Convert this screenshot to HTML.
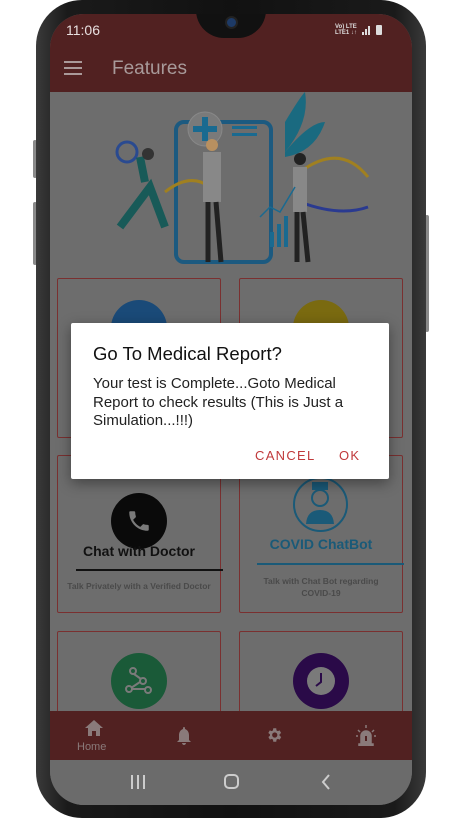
<!DOCTYPE html>
<html><head><meta charset="utf-8"><style>
*{margin:0;padding:0;box-sizing:border-box}
body{width:461px;height:818px;background:#fff;position:relative;overflow:hidden;font-family:"Liberation Sans",Roboto,sans-serif}
.frame{position:absolute;left:36px;top:0;width:390px;height:818px;border-radius:46px;background:linear-gradient(90deg,#3a3a3a,#1a1a1a 8%,#111 50%,#1a1a1a 92%,#3a3a3a);}
.btn{position:absolute;background:#8a8a8a;border-radius:2px}
.screen{position:absolute;left:50px;top:14px;width:362px;height:791px;border-radius:34px;overflow:hidden;background:#6d6d6d}
.status{position:absolute;left:0;top:0;width:362px;height:78px;background:#512121}
.abs{position:absolute}
.card{position:absolute;border:1px solid #7a3030;background:#6d6d6d;border-radius:2px}
.dialog{position:absolute;left:71px;top:323px;width:318px;height:156px;background:#fff;border-radius:2px;box-shadow:0 4px 14px rgba(0,0,0,.4)}
</style></head><body>
<div class="btn" style="left:33px;top:140px;width:4px;height:38px"></div>
<div class="btn" style="left:33px;top:202px;width:4px;height:63px"></div>
<div class="btn" style="left:425px;top:215px;width:4px;height:117px"></div>
<div class="frame"></div>
<div class="screen">
 <div class="status"></div>
 <div class="abs" style="left:146px;top:-4px;width:70px;height:28px;background:#111;border-radius:0 0 35px 35px"></div>
 <div class="abs" style="left:175px;top:2px;width:13px;height:13px;border-radius:50%;background:#1d3a66;border:2px solid #222"></div>
 <div class="abs" style="left:16px;top:8px;color:#e8e0e0;font-size:14px">11:06</div>
 <div class="abs" style="left:285px;top:10px;color:#ddd;font-size:6px;line-height:6px;font-weight:bold">Vo) LTE<br>LTE1 ↓↑</div>
 <svg class="abs" style="left:312px;top:10px" width="30" height="12"><rect x="0" y="8" width="2" height="3" fill="#ddd"/><rect x="3" y="5" width="2" height="6" fill="#ddd"/><rect x="6" y="2" width="2" height="9" fill="#ddd"/><rect x="14" y="1" width="6" height="10" rx="1" fill="#ddd"/></svg>
 <svg class="abs" style="left:14px;top:47px" width="18" height="14"><rect y="0" width="18" height="2" fill="#a99"/><rect y="6" width="18" height="2" fill="#a99"/><rect y="12" width="18" height="2" fill="#a99"/></svg>
 <div class="abs" style="left:62px;top:44px;color:#a89a9a;font-size:19px">Features</div>
 <svg class="abs" style="left:0;top:78px" width="362" height="190">
  <rect x="126" y="30" width="95" height="140" rx="8" fill="none" stroke="#1c5a80" stroke-width="4"/>
  <circle cx="155" cy="37" r="17" fill="#7a7a7a" stroke="#888"/>
  <rect x="152" y="25" width="6" height="24" fill="#1a6a90"/><rect x="143" y="34" width="24" height="6" fill="#1a6a90"/>
  <rect x="182" y="34" width="25" height="3" fill="#1a6a90"/><rect x="182" y="41" width="25" height="3" fill="#1a6a90"/>
  <path d="M235 30 Q250 5 255 0 Q260 30 235 60Z" fill="#1a6a80"/><path d="M235 60 Q260 30 275 30 Q265 60 235 65Z" fill="#1a6a80"/>
  <path d="M115 100 Q140 80 160 95" stroke="#a08020" stroke-width="3" fill="none"/>
  <path d="M250 80 Q290 50 318 85" stroke="#a08020" stroke-width="3" fill="none"/>
  <path d="M250 110 Q290 125 318 115" stroke="#2a3a90" stroke-width="3" fill="none"/>
  <circle cx="77" cy="60" r="10" fill="none" stroke="#2a4a90" stroke-width="3"/>
  <path d="M70 135 l30-40 l15 40 M95 90 l-5-25" stroke="#185a58" stroke-width="8" fill="none"/>
  <circle cx="98" cy="62" r="6" fill="#333"/>
  <rect x="153" y="60" width="18" height="50" fill="#888"/><path d="M158 110 l0 60 M166 110 l5 60" stroke="#222" stroke-width="5"/>
  <circle cx="162" cy="53" r="6" fill="#b89060"/>
  <rect x="243" y="75" width="14" height="45" fill="#888"/><path d="M247 120 l0 50 M253 120 l5 50" stroke="#222" stroke-width="5"/>
  <circle cx="250" cy="67" r="6" fill="#222"/>
  <path d="M210 125 l10-10 l10 5 l15-25" stroke="#1a6a90" stroke-width="1.5" fill="none"/>
  <rect x="220" y="140" width="4" height="15" fill="#1a6a90"/><rect x="227" y="132" width="4" height="23" fill="#1a6a90"/><rect x="234" y="124" width="4" height="31" fill="#1a6a90"/>
 </svg>
 <div class="card" style="left:7px;top:264px;width:164px;height:160px"></div>
 <div class="card" style="left:189px;top:264px;width:164px;height:160px"></div>
 <div class="abs" style="left:61px;top:286px;width:56px;height:56px;border-radius:50%;background:#1a4a78"></div>
 <div class="abs" style="left:243px;top:286px;width:56px;height:56px;border-radius:50%;background:#7a6a10"></div>
 <div class="card" style="left:7px;top:441px;width:164px;height:158px"></div>
 <div class="card" style="left:189px;top:441px;width:164px;height:158px"></div>
 <div class="abs" style="left:61px;top:479px;width:56px;height:56px;border-radius:50%;background:#0a0a0a"></div>
 <svg class="abs" style="left:76px;top:494px" width="26" height="26" viewBox="0 0 24 24"><path fill="#7a7a7a" d="M6.6 10.8c1.4 2.8 3.8 5.1 6.6 6.6l2.2-2.2c.3-.3.7-.4 1-.2 1.1.4 2.3.6 3.6.6.6 0 1 .4 1 1V20c0 .6-.4 1-1 1C10.6 21 3 13.4 3 4c0-.6.4-1 1-1h3.5c.6 0 1 .4 1 1 0 1.3.2 2.5.6 3.6.1.3 0 .7-.2 1z"/></svg>
 <div class="abs" style="left:7px;top:529px;width:164px;text-align:center;font-size:14px;font-weight:bold;color:#111">Chat with Doctor</div>
 <div class="abs" style="left:26px;top:555px;width:147px;height:2px;background:#111"></div>
 <div class="abs" style="left:7px;top:567px;width:164px;text-align:center;font-size:8.5px;font-weight:bold;color:#4a4a4a;white-space:nowrap">Talk Privately with a Verified Doctor</div>
 <div class="abs" style="left:243px;top:463px;width:55px;height:55px;border-radius:50%;border:2px solid #1a5a78"></div>
 <svg class="abs" style="left:253px;top:466px" width="36" height="48"><rect x="9" y="2" width="16" height="8" fill="#1a5a78"/><circle cx="17" cy="18" r="8" fill="#6d6d6d" stroke="#1a5a78" stroke-width="2"/><path d="M3 44 Q4 30 17 30 Q30 30 31 44Z" fill="#1a5a78"/></svg>
 <div class="abs" style="left:189px;top:522px;width:164px;text-align:center;font-size:14px;font-weight:bold;color:#1a5a78">COVID ChatBot</div>
 <div class="abs" style="left:207px;top:549px;width:147px;height:2px;background:#1a5a78"></div>
 <div class="abs" style="left:189px;top:561px;width:164px;text-align:center;font-size:8.5px;font-weight:bold;color:#4a4a4a;line-height:12px">Talk with Chat Bot regarding<br>COVID-19</div>
 <div class="card" style="left:7px;top:617px;width:164px;height:100px"></div>
 <div class="card" style="left:189px;top:617px;width:164px;height:100px"></div>
 <div class="abs" style="left:61px;top:639px;width:56px;height:56px;border-radius:50%;background:#1a5a38"></div>
 <svg class="abs" style="left:74px;top:652px" width="30" height="30"><g fill="none" stroke="#7a7a7a" stroke-width="2"><circle cx="9" cy="5" r="3"/><circle cx="19" cy="15" r="3"/><circle cx="5" cy="23" r="3"/><circle cx="24" cy="24" r="3"/><path d="M10 8l7 5M16 16l-9 6M8 23h13"/></g></svg>
 <div class="abs" style="left:243px;top:639px;width:56px;height:56px;border-radius:50%;background:#2a0a48"></div>
 <div class="abs" style="left:257px;top:653px;width:28px;height:28px;border-radius:50%;background:#7a7a7a"></div>
 <svg class="abs" style="left:257px;top:653px" width="28" height="28"><path d="M14 6v9l-5 4" stroke="#2a0a48" stroke-width="2" fill="none"/></svg>
 <div class="abs" style="left:0;top:697px;width:362px;height:49px;background:#512121"></div>
 <svg class="abs" style="left:35px;top:706px" width="18" height="16"><path d="M9 0L0 8h3v8h4v-5h4v5h4V8h3z" fill="#8a7a7a"/></svg>
 <div class="abs" style="left:27px;top:727px;font-size:11px;color:#8a7a7a">Home</div>
 <svg class="abs" style="left:126px;top:713px" width="16" height="18"><path d="M8 0c-1 0-1 1-1 2C4 3 3 6 3 8v5l-2 2h14l-2-2V8c0-2-1-5-4-6 0-1 0-2-1-2zM6 16h4c0 1-1 2-2 2s-2-1-2-2z" fill="#8a7a7a"/></svg>
 <svg class="abs" style="left:215px;top:712px" width="18" height="18" viewBox="0 0 24 24"><path fill="#8a7a7a" d="M19.4 13a7.5 7.5 0 000-2l2.1-1.6-2-3.5-2.5 1a7 7 0 00-1.7-1L15 3h-4l-.4 2.9a7 7 0 00-1.7 1l-2.5-1-2 3.5L6.6 11a7.5 7.5 0 000 2l-2.1 1.6 2 3.5 2.5-1c.5.4 1.1.7 1.7 1L11 21h4l.4-2.9c.6-.3 1.2-.6 1.7-1l2.5 1 2-3.5zM13 15.5a3.5 3.5 0 110-7 3.5 3.5 0 010 7z"/></svg>
 <svg class="abs" style="left:305px;top:710px" width="22" height="22"><path d="M6 20v-8a5 5 0 0110 0v8zM4 20h14v2H4zM11 1v3M3 6l2 2M19 6l-2 2M1 12h2M19 12h2" stroke="#8a7a7a" stroke-width="1.5" fill="#8a7a7a"/><rect x="10" y="12" width="2" height="5" fill="#512121"/></svg>
 <div class="abs" style="left:0;top:746px;width:362px;height:45px;background:#6b6b6b"></div>
 <svg class="abs" style="left:80px;top:760px" width="16" height="16"><path d="M2 1v14M8 1v14M14 1v14" stroke="#ccc" stroke-width="2"/></svg>
 <div class="abs" style="left:174px;top:760px;width:15px;height:15px;border:2px solid #ccc;border-radius:5px"></div>
 <svg class="abs" style="left:270px;top:759px" width="12" height="18"><path d="M9 2L3 9l6 7" stroke="#ccc" stroke-width="2" fill="none"/></svg>
</div>
<div class="dialog">
 <div class="abs" style="left:22px;top:20px;font-size:18.5px;color:#111">Go To Medical Report?</div>
 <div class="abs" style="left:22px;top:52px;width:300px;font-size:15px;line-height:18.5px;color:#222;white-space:nowrap">Your test is Complete...Goto Medical<br>Report to check results (This is Just a<br>Simulation...!!!)</div>
 <div class="abs" style="left:184px;top:125px;font-size:13px;letter-spacing:1.3px;color:#c0393b">CANCEL</div>
 <div class="abs" style="left:268px;top:125px;font-size:13px;letter-spacing:1.3px;color:#c0393b">OK</div>
</div>
</body></html>
